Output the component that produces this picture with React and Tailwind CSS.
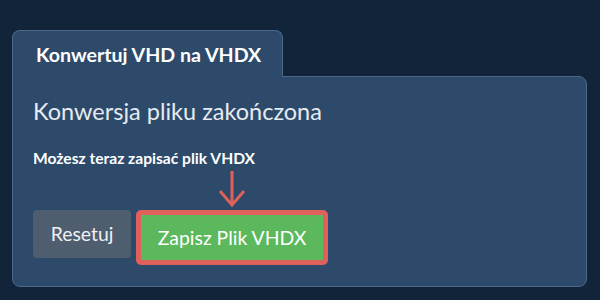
export default function App() {
  return (
    <div
      className="w-[600px] h-[300px] bg-[#11243a] pl-[12px] pt-[30px]"
      style={{ fontFamily: "Lato, 'Noto Sans', sans-serif" }}
    >
      <div className="w-[575px]">
        <div className="relative z-10 w-[271px] h-[47px] -mb-px bg-[#2d4a6a] border border-b-0 border-[#4b6889] rounded-t-[8px] flex items-center pl-[23px]">
          <span className="text-[19.6px] font-bold text-white leading-none pt-[2px]">
            Konwertuj VHD na VHDX
          </span>
        </div>
        <div className="h-[211px] bg-[#2d4a6a] border border-[#4b6889] rounded-b-[8px] rounded-tr-[8px] pl-[20px] pt-[18px]">
          <h1 className="text-[23.5px] leading-[32px] font-normal text-[#e6ebf1]">
            Konwersja pliku zakończona
          </h1>
          <p className="mt-[21px] text-[15.6px] leading-[20px] font-bold text-white">
            Możesz teraz zapisać plik VHDX
          </p>
          <div className="mt-[42px] flex items-start gap-[5px]">
            <button className="w-[98px] h-[48px] rounded-[4px] bg-[#4e5e6e] text-[19.4px] text-[#eef1f4]">
              Resetuj
            </button>
            <div className="relative">
              <svg
                className="absolute left-[82px] -top-[39px]"
                width="28"
                height="37"
                viewBox="0 0 28 37"
                fill="none"
                stroke="#e0605a"
                strokeWidth="3"
              >
                <path d="M14 0 V34" />
                <path d="M2 20 L14 34 L26 20" />
              </svg>
              <div className="rounded-[5px] border-[5px] border-[#e0615b]">
                <button className="w-[182px] h-[45px] bg-[#5cb85c] text-[19.4px] text-white">
                  Zapisz Plik VHDX
                </button>
              </div>
            </div>
          </div>
        </div>
      </div>
    </div>
  );
}
